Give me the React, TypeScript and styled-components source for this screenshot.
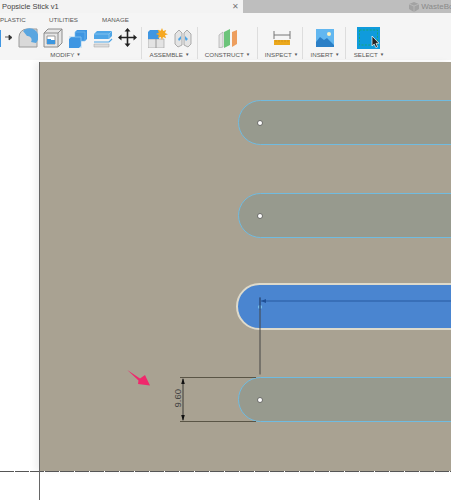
import styled, { createGlobalStyle } from "styled-components";

const GlobalStyle = createGlobalStyle`
  html, body {
    margin: 0;
    padding: 0;
    background: #ffffff;
    overflow: hidden;
  }
`;

const Page = styled.div`
  width: 451px;
  height: 500px;
  display: flex;
  flex-direction: column;
  overflow: hidden;
  font-family: "Liberation Sans", Arial, sans-serif;
  color: #555;
`;

const TabBar = styled.div`
  height: 13px;
  display: flex;
  flex-shrink: 0;
`;

const ActiveTab = styled.div`
  width: 243px;
  padding: 0 4px 0 2px;
  box-sizing: border-box;
  background: #f3f3f3;
  display: flex;
  justify-content: space-between;
  align-items: center;
`;

const TabTitle = styled.span`
  font-size: 7.5px;
  color: #444;
`;

const CloseMark = styled.span`
  font-size: 8px;
  color: #777;
`;

const InactiveTab = styled.div`
  flex: 1;
  background: #bebebe;
  display: flex;
  justify-content: flex-end;
  align-items: center;
  gap: 2px;
  overflow: hidden;
  white-space: nowrap;
  font-size: 8px;
  color: #8a8a8a;
  padding-right: 0;
  margin-right: -14px;
`;

const Ribbon = styled.div`
  height: 47px;
  flex-shrink: 0;
  background: #f5f5f5;
  box-sizing: border-box;
  display: flex;
  flex-direction: column;
`;

const SectionTabs = styled.div`
  height: 13px;
  display: flex;
  align-items: center;
`;

const SectionTab = styled.span<{ $width: number }>`
  width: ${(p) => p.$width}px;
  font-size: 6.2px;
  color: #555;
`;

const ToolRow = styled.div`
  display: flex;
  margin: 1px 0 0 -10px;
  height: 32px;
`;

const ToolGroup = styled.div<{ $width: number; $divider?: boolean; $pad?: number }>`
  width: ${(p) => p.$width}px;
  flex-shrink: 0;
  box-sizing: border-box;
  padding-left: ${(p) => p.$pad ?? 0}px;
  display: flex;
  flex-direction: column;
  align-items: center;
  justify-content: space-between;
  border-right: ${(p) => (p.$divider === false ? "none" : "1px solid #dddddd")};
`;

const ToolIcons = styled.div<{ $gap?: number }>`
  display: flex;
  gap: ${(p) => p.$gap ?? 6}px;
  align-items: center;
  height: 21px;
`;

const GroupLabel = styled.div`
  font-size: 6.2px;
  line-height: 9px;
  color: #555;
  white-space: nowrap;
`;

const Caret = styled.span`
  font-size: 4.5px;
  margin-left: 2px;
  vertical-align: 1px;
`;

const Workspace = styled.div`
  flex: 1;
  display: flex;
  flex-direction: column;
  position: relative;
  min-height: 0;
`;

const Viewport = styled.div`
  margin: 2px 0 0 39px;
  height: 409px;
  flex-shrink: 0;
  background: #a9a292;
  box-shadow: -4px 0 6px rgba(0, 0, 0, 0.06);
  box-sizing: border-box;
  padding-top: 38px;
  display: flex;
  flex-direction: column;
  gap: 48px;
  overflow: hidden;
  position: relative;
`;

const Stick = styled.div<{ $selected?: boolean }>`
  height: ${(p) => (p.$selected ? 47 : 45)}px;
  margin-left: ${(p) => (p.$selected ? 197 : 199)}px;
  margin-top: ${(p) => (p.$selected ? -3 : 0)}px;
  margin-bottom: ${(p) => (p.$selected ? -1 : 0)}px;
  margin-right: -30px;
  box-sizing: border-box;
  border: ${(p) => (p.$selected ? "2px solid #dedacb" : "1.5px solid #70bbe0")};
  border-radius: 24px;
  background: ${(p) => (p.$selected ? "#4a85d0" : "#979a8e")};
  flex-shrink: 0;
  display: flex;
  align-items: center;
  padding-left: ${(p) => (p.$selected ? 20 : 19)}px;
`;

const Point = styled.span<{ $selected?: boolean }>`
  width: 4px;
  height: 4px;
  border-radius: 50%;
  background: ${(p) => (p.$selected ? "#7cc4ec" : "#ffffff")};
  box-shadow: ${(p) => (p.$selected ? "none" : "0 0 0 0.7px #666")};
`;

const Annotations = styled.svg`
  position: absolute;
  left: 0;
  top: 0;
  width: 412px;
  height: 409px;
  pointer-events: none;
`;

const DimensionValue = styled.span`
  position: absolute;
  left: 129px;
  top: 331px;
  width: 18px;
  text-align: center;
  font-size: 9.5px;
  line-height: 11px;
  color: #444;
  transform: rotate(-90deg);
`;

const Origin = styled.svg`
  position: absolute;
  left: 0;
  top: 0;
  width: 451px;
  height: 440px;
  pointer-events: none;
`;

const PressPullIcon = () => (
  <svg width="18" height="20" viewBox="1 0 18 20">
    <path d="M0 2h7v17H0z" fill="#3f96e2" />
    <path d="M11 9h6M15 7l3 2.500-3 2.500z" stroke="#333" fill="#333" strokeWidth="0.8" />
  </svg>
);

const FilletIcon = () => (
  <svg width="20" height="20" viewBox="0 0 20 20">
    <path d="M1 19V9a8 8 0 0 1 8-8h10v18z" fill="#d9d9d9" stroke="#9a9a9a" />
    <path d="M5 3a8 8 0 0 1 13 12l-5-1a4 4 0 0 0-4-6z" fill="#5aa6e0" />
  </svg>
);

const ShellIcon = () => (
  <svg width="20" height="20" viewBox="0 0 20 20">
    <path d="M1 5l4-4h14v14l-4 4H1z" fill="#e6e6e6" stroke="#8c8c8c" />
    <path d="M1 5h14v14M15 5l4-4" fill="none" stroke="#8c8c8c" />
    <path d="M4 8h8v8H4z" fill="#ffffff" stroke="#9a9a9a" />
    <path d="M4 11h4v-3h0v8H4zM8 12h4v4H5z" fill="#3c97e0" />
  </svg>
);

const CombineIcon = () => (
  <svg width="20" height="20" viewBox="0 0 20 20">
    <path d="M7 4l2-2h10v9l-2 2h-4v5l-2 2H1v-9l2-2h4z" fill="#3f96e2" />
    <path d="M7 9V4h10v9h-4V9zM1 9h12v11" fill="none" stroke="#7cc0f0" strokeWidth="0.6" />
  </svg>
);

const OffsetIcon = () => (
  <svg width="20" height="20" viewBox="0 0 20 20">
    <path d="M1 6l3-3h15v5l-3 3H1z" fill="#4ea5e6" />
    <path d="M1 6h15l3-3M16 6v5" fill="none" stroke="#a6d4f4" strokeWidth="0.6" />
    <path d="M1 14h15l3-3" fill="none" stroke="#4ea5e6" strokeWidth="1.2" />
    <path d="M1 16h15v3H1z" fill="#dcdcdc" stroke="#a0a0a0" strokeWidth="0.5" />
  </svg>
);

const MoveIcon = () => (
  <svg width="19" height="19" viewBox="0 0 19 19">
    <path d="M9.5 2v15M2 9.5h15" stroke="#222" strokeWidth="1.6" />
    <path d="M9.5 0l3 3.5h-6zM9.5 19l3-3.5h-6zM0 9.5l3.5-3v6zM19 9.5l-3.5-3v6z" fill="#222" />
  </svg>
);

const AssembleIcon = () => (
  <svg width="20" height="20" viewBox="0 0 20 20">
    <path d="M0 11h8v9H0zM8 11h8v9H8z" fill="#e3e3e3" stroke="#9a9a9a" strokeWidth="0.6" />
    <path d="M0 4l2-2h9v9H0z" fill="#3f96e2" />
    <path d="M14 0l1.2 3 3-1-1.2 3 3 1.2-3 1 1 3-3-1.2-1 3-1.2-3-3 1 1-3-3-1 3-1.2-1-3 3 1z" fill="#f6a821" />
  </svg>
);

const JointIcon = () => (
  <svg width="18" height="20" viewBox="0 0 18 20">
    <path d="M1 6l4-4 3 3v12l-4 2-3-3z" fill="#e4e4e4" stroke="#8f8f8f" strokeWidth="0.7" />
    <path d="M17 6l-4-4-3 3v12l4 2 3-3z" fill="#e4e4e4" stroke="#8f8f8f" strokeWidth="0.7" />
    <path d="M4 11l3-3v3l-2 2zM11 8l3 3-2 2-1-2z" fill="#4ea5e6" />
  </svg>
);

const ConstructIcon = () => (
  <svg width="20" height="20" viewBox="0 0 20 20">
    <path d="M6 4l6-3v16l-6 3z" fill="#6cc47a" />
    <path d="M1 7l4-3v15l-4 1z" fill="#e4e4e4" stroke="#a0a0a0" strokeWidth="0.6" />
    <path d="M14 4l5-2v14l-5 3z" fill="#ed9e5e" />
  </svg>
);

const InspectIcon = () => (
  <svg width="18" height="16" viewBox="0 0 18 16">
    <path d="M1 1v8M17 1v8M1 5h16" stroke="#777" strokeWidth="1" />
    <path d="M1 10h16v5H1z" fill="#eba81c" />
    <path d="M3 10v2M6 10v2M9 10v2M12 10v2M15 10v2" stroke="#b87f10" strokeWidth="0.5" />
  </svg>
);

const InsertIcon = () => (
  <svg width="18" height="18" viewBox="0 0 18 18">
    <path d="M0 0h18v18H0z" fill="#62b7f0" />
    <path d="M0 18v-5l4-5 4 3 3-2 7 7v2z" fill="#2b7fc6" />
    <circle cx="13" cy="5" r="2" fill="#fbf3c4" />
  </svg>
);

const SelectIcon = () => (
  <svg width="24" height="22" viewBox="0 0 24 22">
    <path d="M0 0h23v22H0z" fill="#0f9bdc" />
    <path d="M2.5 3h18v15" fill="none" stroke="#17a86e" strokeWidth="0.9" strokeDasharray="2 1.4" />
    <path d="M2.5 3v15h14" fill="none" stroke="#17a86e" strokeWidth="0.9" strokeDasharray="2 1.4" />
    <path d="M15 9l0 10 2.2-2 1.6 3.6 1.8-.8-1.6-3.4 3-.2z" fill="#222" stroke="#fff" strokeWidth="0.7" />
  </svg>
);

const App = () => {
  return (
    <Page>
      <GlobalStyle />
      <TabBar>
        <ActiveTab>
          <TabTitle>Popsicle Stick v1</TabTitle>
          <CloseMark>✕</CloseMark>
        </ActiveTab>
        <InactiveTab>
          <svg width="10" height="10" viewBox="0 0 10 10">
            <path d="M0 2l5-2 5 2v5l-5 3-5-3z" fill="#a2a2a2" />
            <path d="M5 4v6M0 2l5 2 5-2" stroke="#c8c8c8" strokeWidth="0.6" fill="none" />
          </svg>
          <span>WasteBoard</span>
        </InactiveTab>
      </TabBar>
      <Ribbon>
        <SectionTabs>
          <SectionTab $width={49}>PLASTIC</SectionTab>
          <SectionTab $width={53}>UTILITIES</SectionTab>
          <SectionTab $width={40}>MANAGE</SectionTab>
        </SectionTabs>
        <ToolRow>
          <ToolGroup $width={152}>
            <ToolIcons $gap={5}>
              <PressPullIcon />
              <FilletIcon />
              <ShellIcon />
              <CombineIcon />
              <OffsetIcon />
              <MoveIcon />
            </ToolIcons>
            <GroupLabel>MODIFY<Caret>▼</Caret></GroupLabel>
          </ToolGroup>
          <ToolGroup $width={56}>
            <ToolIcons>
              <AssembleIcon />
              <JointIcon />
            </ToolIcons>
            <GroupLabel>ASSEMBLE<Caret>▼</Caret></GroupLabel>
          </ToolGroup>
          <ToolGroup $width={60}>
            <ToolIcons>
              <ConstructIcon />
            </ToolIcons>
            <GroupLabel>CONSTRUCT<Caret>▼</Caret></GroupLabel>
          </ToolGroup>
          <ToolGroup $width={45} $pad={3}>
            <ToolIcons>
              <InspectIcon />
            </ToolIcons>
            <GroupLabel>INSPECT<Caret>▼</Caret></GroupLabel>
          </ToolGroup>
          <ToolGroup $width={43} $pad={2}>
            <ToolIcons>
              <InsertIcon />
            </ToolIcons>
            <GroupLabel>INSERT<Caret>▼</Caret></GroupLabel>
          </ToolGroup>
          <ToolGroup $width={46} $divider={false}>
            <ToolIcons>
              <SelectIcon />
            </ToolIcons>
            <GroupLabel>SELECT<Caret>▼</Caret></GroupLabel>
          </ToolGroup>
        </ToolRow>
      </Ribbon>
      <Workspace>
        <Viewport>
          <Stick>
            <Point />
          </Stick>
          <Stick>
            <Point />
          </Stick>
          <Stick $selected>
            <Point $selected />
          </Stick>
          <Stick>
            <Point />
          </Stick>
          <Annotations viewBox="0 0 412 409">
            {/* sketch lines on the selected stick */}
            <path d="M221 235.500v77" stroke="#444" strokeWidth="1" fill="none" />
            <path d="M221 235.500v12" stroke="#1f4f96" strokeWidth="1" fill="none" />
            <path d="M222 239h190" stroke="#1f4f96" strokeWidth="0.8" fill="none" />
            <path d="M222 239l5-2v4z" fill="#1f4f96" />
            {/* 9.60 dimension */}
            <path d="M181 315.500h36M141 315.500h40M141 359.500h76" stroke="#5a5546" strokeWidth="1" fill="none" />
            <path d="M144 317v41" stroke="#222" strokeWidth="0.8" fill="none" />
            <path d="M144 316l-1.800 6h3.600zM144 359l-1.800-6h3.600z" fill="#111" />
            {/* pink pointer */}
            <path d="M88.300 308l12.700 8.500 5-3.500 5 10.600-12-1.600 .5-3.500z" fill="#f0286c" />
          </Annotations>
          <DimensionValue>9.60</DimensionValue>
        </Viewport>
        <Origin viewBox="0 0 451 440">
          <path d="M0 411.500h451" stroke="#555" strokeWidth="1" strokeDasharray="14 1" />
          <path d="M39.500 2v438" stroke="#666" strokeWidth="1" />
        </Origin>
      </Workspace>
    </Page>
  );
};

export default App;
